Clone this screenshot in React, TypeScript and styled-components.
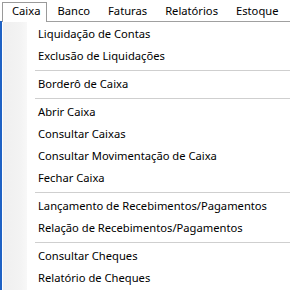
import React from "react";
import styled, { createGlobalStyle } from "styled-components";

const Global = createGlobalStyle`
  html, body { margin: 0; padding: 0; background: #ffffff; }
  body { font-family: "Noto Sans", "Open Sans", Arial, sans-serif; }
`;

const Page = styled.div`
  width: 290px;
  height: 290px;
  overflow: hidden;
  background: #ffffff;
  display: flex;
  flex-direction: column;
  font-family: "Noto Sans", "Open Sans", Arial, sans-serif;
  font-size: 11.2px;
  color: #000000;
`;

const MenuBar = styled.div`
  height: 21px;
  display: flex;
  align-items: flex-end;
  padding-left: 2px;
  background: #ffffff;
  flex-shrink: 0;
`;

const BarItem = styled.div<{ $active?: boolean }>`
  box-sizing: border-box;
  display: flex;
  align-items: center;
  padding: ${(p) => (p.$active ? "0 6px 5px 9px" : "0 7px 4px 8px")};
  margin-left: ${(p) => (p.$active ? "0" : "1px")};
  white-space: nowrap;
  border: ${(p) => (p.$active ? "1px solid #9a9a9a" : "1px solid transparent")};
  border-bottom: none;
  background: #ffffff;
  position: relative;
  z-index: 1;
  margin-bottom: ${(p) => (p.$active ? "-1px" : "0")};
  height: ${(p) => (p.$active ? "20px" : "19px")};
`;

const Body = styled.div`
  flex: 1;
  display: flex;
  min-height: 0;
`;

const Strip = styled.div`
  width: 2px;
  background: #1f62c4;
  flex-shrink: 0;
`;

const Popup = styled.div`
  flex: 1;
  display: flex;
  border-top: 1px solid #a0a0a0;
  padding-left: 1px;
  background: #ffffff;
  min-width: 0;
`;

const Gutter = styled.div`
  width: 24px;
  flex-shrink: 0;
  background: linear-gradient(to right, #efefef, #f3f3f3 70%, #f8f8f8);
`;

const List = styled.div`
  flex: 1;
  display: flex;
  flex-direction: column;
  padding-top: 1px;
  min-width: 0;
`;

const Item = styled.div`
  height: 22px;
  box-sizing: border-box;
  display: flex;
  align-items: center;
  padding: 0 0 2px 11px;
  white-space: nowrap;
`;

const Separator = styled.div`
  height: 6px;
  display: flex;
  align-items: center;
  padding-left: 8px;
  &::after {
    content: "";
    flex: 1;
    height: 1px;
    background: #cfcfcf;
  }
`;

type Entry = { label?: string; sep?: boolean };

const entries: Entry[] = [
  { label: "Liquidação de Contas" },
  { label: "Exclusão de Liquidações" },
  { sep: true },
  { label: "Borderô de Caixa" },
  { sep: true },
  { label: "Abrir Caixa" },
  { label: "Consultar Caixas" },
  { label: "Consultar Movimentação de Caixa" },
  { label: "Fechar Caixa" },
  { sep: true },
  { label: "Lançamento de Recebimentos/Pagamentos" },
  { label: "Relação de Recebimentos/Pagamentos" },
  { sep: true },
  { label: "Consultar Cheques" },
  { label: "Relatório de Cheques" },
];

const menus = ["Caixa", "Banco", "Faturas", "Relatórios", "Estoque"];

export default function App() {
  return (
    <>
      <Global />
      <Page>
        <MenuBar>
          {menus.map((m, i) => (
            <BarItem key={m} $active={i === 0}>
              {m}
            </BarItem>
          ))}
        </MenuBar>
        <Body>
          <Strip />
          <Popup>
            <Gutter />
            <List>
              {entries.map((e, i) =>
                e.sep ? <Separator key={i} /> : <Item key={i}>{e.label}</Item>
              )}
            </List>
          </Popup>
        </Body>
      </Page>
    </>
  );
}
